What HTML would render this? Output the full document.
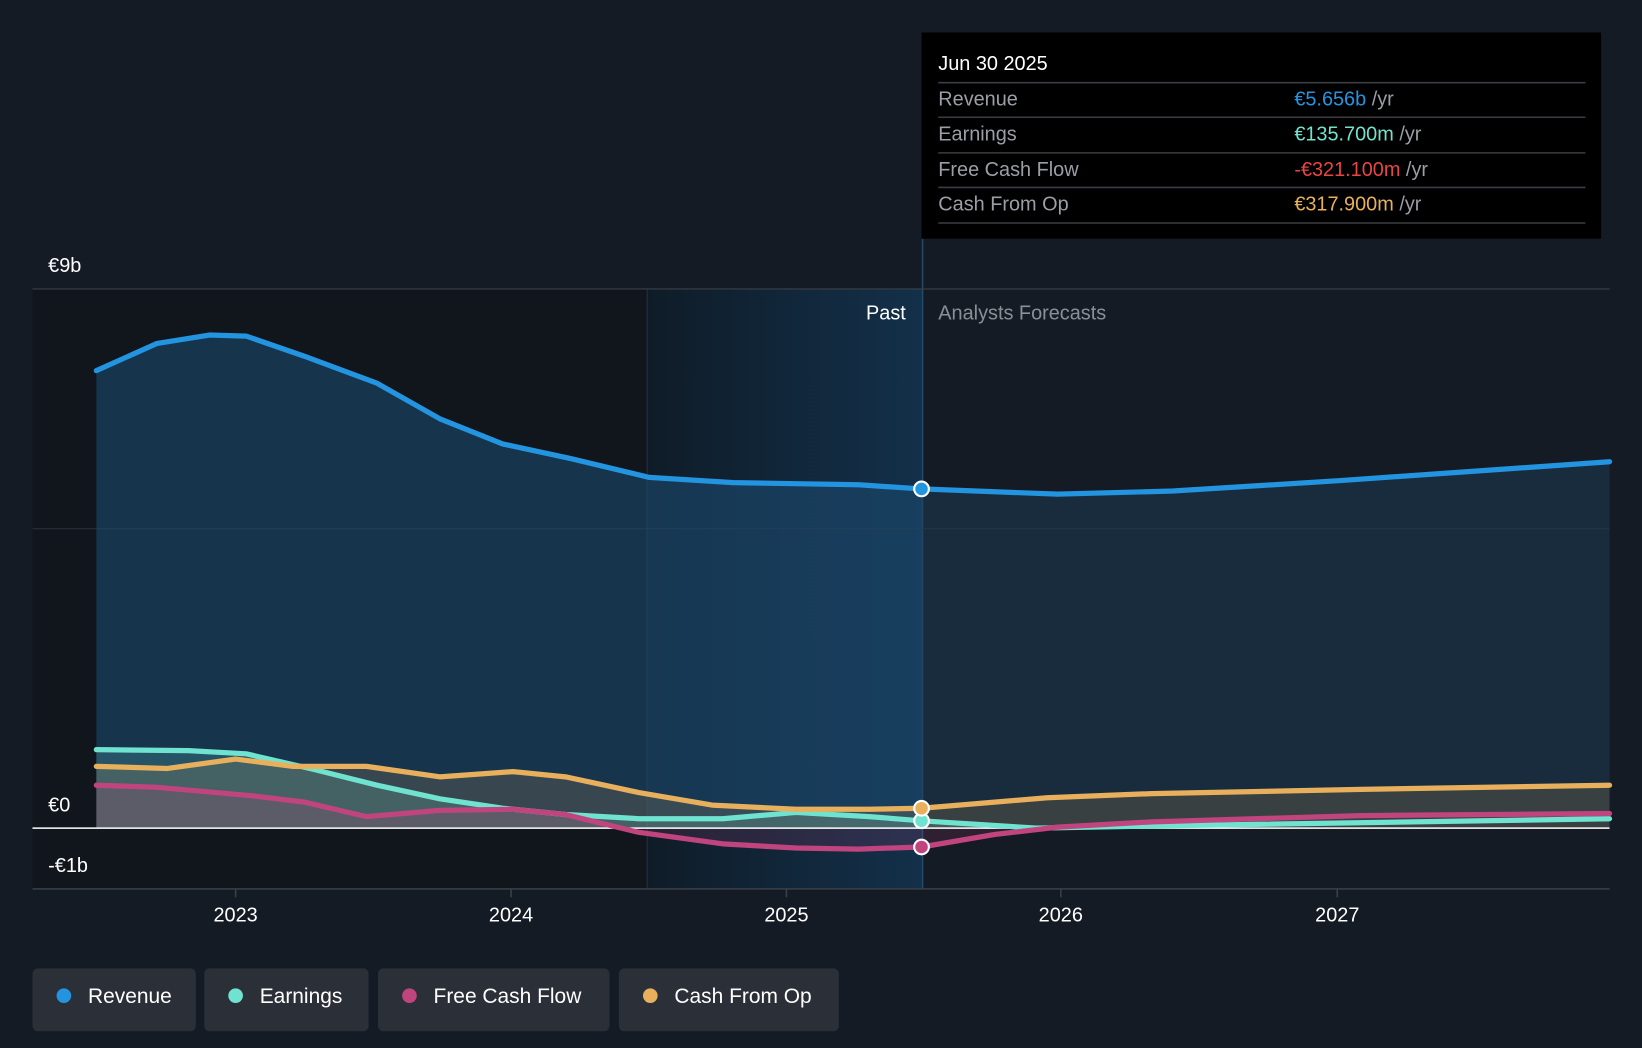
<!DOCTYPE html>
<html><head><meta charset="utf-8"><style>
html,body{margin:0;padding:0;background:#151b24;overflow:hidden}
svg{display:block}
text{font-family:"Liberation Sans",sans-serif}
</style></head><body>
<svg width="1642" height="1048" viewBox="0 0 1568 1001" preserveAspectRatio="none" xmlns="http://www.w3.org/2000/svg">
<defs>
<linearGradient id="hl" x1="0" x2="1" y1="0" y2="0">
<stop offset="0" stop-color="#0f1c28"/><stop offset="1" stop-color="#13304a"/>
</linearGradient>
<clipPath id="past"><rect x="0" y="0" width="881" height="1001"/></clipPath>
<clipPath id="fut"><rect x="881" y="0" width="700" height="1001"/></clipPath>
</defs>
<rect width="1568" height="1001" fill="#151b24"/>
<rect x="31" y="276" width="587" height="573" fill="#11151c"/>
<rect x="618" y="276" width="263" height="573" fill="url(#hl)"/>
<line x1="618" y1="276" x2="618" y2="849" stroke="#1f3344" stroke-width="1"/>
<line x1="881" y1="228" x2="881" y2="849" stroke="#24496a" stroke-width="1.5"/>
<line x1="31" y1="276" x2="1537" y2="276" stroke="#3a3f48" stroke-width="1"/>
<line x1="31" y1="505" x2="1537" y2="505" stroke="#2c323b" stroke-width="1"/>
<line x1="31" y1="849" x2="1537" y2="849" stroke="#3a3f48" stroke-width="1.5"/>
<g stroke="#3a3f48" stroke-width="1.5"><line x1="225" y1="849" x2="225" y2="857"/><line x1="488" y1="849" x2="488" y2="857"/><line x1="751" y1="849" x2="751" y2="857"/><line x1="1013" y1="849" x2="1013" y2="857"/><line x1="1277" y1="849" x2="1277" y2="857"/></g>

<g id="revfill">
<polygon clip-path="url(#past)" fill="#1c4a6e" fill-opacity="0.6" points="92,354 150,328 200,320 235,321 290,340 360,366 420,400 480,424 545,438 620,456 700,461 760,462 820,463 880,467 1010,472 1120,469 1280,459 1537,441 1537,791 92,791"/>
<polygon clip-path="url(#fut)" fill="#1e3a52" fill-opacity="0.55" points="92,354 150,328 200,320 235,321 290,340 360,366 420,400 480,424 545,438 620,456 700,461 760,462 820,463 880,467 1010,472 1120,469 1280,459 1537,441 1537,791 92,791"/>
</g>
<polygon fill="#6fe3d0" fill-opacity="0.18" points="92,716 180,717 235,720 300,735 360,750 420,763 480,772 540,778 610,782 690,782 760,776 830,780 880,784 990,791 92,791"/>
<polygon fill="#e8b05c" fill-opacity="0.16" points="92,732 160,734 225,725 280,732 350,732 420,742 490,737 540,742 610,757 680,769 760,773 830,773 880,772 1000,762 1100,758 1300,754 1537,750 1537,791 92,791"/>
<polygon fill="#c0457f" fill-opacity="0.2" points="92,750 150,752 240,760 290,766 350,780 420,774 490,773 540,778 580,791 92,791"/>
<polygon fill="#c0457f" fill-opacity="0.15" points="580,791 610,795 690,806 760,810 820,811 880,809 950,797 1010,791"/>

<line x1="31" y1="791" x2="1537" y2="791" stroke="#ffffff" stroke-width="1.5"/>

<g fill="none" stroke-width="5" stroke-linejoin="round" stroke-linecap="round">
<polyline stroke="#2394e0" points="92,354 150,328 200,320 235,321 290,340 360,366 420,400 480,424 545,438 620,456 700,461 760,462 820,463 880,467 1010,472 1120,469 1280,459 1537,441"/>
<polyline stroke="#6fe3d0" points="92,716 180,717 235,720 300,735 360,750 420,763 480,772 540,778 610,782 690,782 760,776 830,780 880,784 990,791 1100,789 1537,782"/>
<polyline stroke="#c0457f" points="92,750 150,752 240,760 290,766 350,780 420,774 490,773 540,778 610,795 690,806 760,810 820,811 880,809 950,797 1010,790 1100,785 1300,779 1537,777"/>
<polyline stroke="#e8b05c" points="92,732 160,734 225,725 280,732 350,732 420,742 490,737 540,742 610,757 680,769 760,773 830,773 880,772 1000,762 1100,758 1300,754 1537,750"/>
</g>
<g stroke="#fff" stroke-width="2">
<circle cx="880" cy="467" r="7" fill="#2394e0"/>
<circle cx="880" cy="784" r="7" fill="#6fe3d0"/>
<circle cx="880" cy="772" r="7" fill="#e8b05c"/>
<circle cx="880" cy="809" r="7" fill="#c0457f"/>
</g>

<g font-size="19" fill="#fff">
<text x="46" y="260">€9b</text>
<text x="46" y="775">€0</text>
<text x="46" y="833">-€1b</text>
<text x="225" y="880" text-anchor="middle">2023</text>
<text x="488" y="880" text-anchor="middle">2024</text>
<text x="751" y="880" text-anchor="middle">2025</text>
<text x="1013" y="880" text-anchor="middle">2026</text>
<text x="1277" y="880" text-anchor="middle">2027</text>
<text x="865" y="305" text-anchor="end">Past</text>
<text x="896" y="305" fill="#8a8f97">Analysts Forecasts</text>
</g>

<rect x="880" y="31" width="649" height="197" fill="#000"/>
<g font-size="19">
<text x="896" y="67" fill="#fff">Jun 30 2025</text>
<g stroke="#3a3d42" stroke-width="1.5"><line x1="896" y1="79" x2="1514" y2="79"/><line x1="896" y1="112" x2="1514" y2="112"/><line x1="896" y1="146" x2="1514" y2="146"/><line x1="896" y1="179" x2="1514" y2="179"/><line x1="896" y1="213" x2="1514" y2="213"/></g>
<text x="896" y="101" fill="#9a9ea5">Revenue</text>
<text x="896" y="134" fill="#9a9ea5">Earnings</text>
<text x="896" y="168" fill="#9a9ea5">Free Cash Flow</text>
<text x="896" y="201" fill="#9a9ea5">Cash From Op</text>
<text x="1236" y="101" fill="#2394e0">€5.656b <tspan fill="#9a9ea5">/yr</tspan></text>
<text x="1236" y="134" fill="#6fe3d0">€135.700m <tspan fill="#9a9ea5">/yr</tspan></text>
<text x="1236" y="168" fill="#e84545">-€321.100m <tspan fill="#9a9ea5">/yr</tspan></text>
<text x="1236" y="201" fill="#e8b05c">€317.900m <tspan fill="#9a9ea5">/yr</tspan></text>
</g>

<g font-size="20" fill="#fff">
<rect x="31" y="925" width="156" height="60" rx="5" fill="#2b2f38"/>
<circle cx="61" cy="951" r="7" fill="#2394e0"/><text x="84" y="958">Revenue</text>
<rect x="195" y="925" width="157" height="60" rx="5" fill="#2b2f38"/>
<circle cx="225" cy="951" r="7" fill="#6fe3d0"/><text x="248" y="958">Earnings</text>
<rect x="361" y="925" width="221" height="60" rx="5" fill="#2b2f38"/>
<circle cx="391" cy="951" r="7" fill="#c0457f"/><text x="414" y="958">Free Cash Flow</text>
<rect x="591" y="925" width="210" height="60" rx="5" fill="#2b2f38"/>
<circle cx="621" cy="951" r="7" fill="#e8b05c"/><text x="644" y="958">Cash From Op</text>
</g>
</svg>
</body></html>
